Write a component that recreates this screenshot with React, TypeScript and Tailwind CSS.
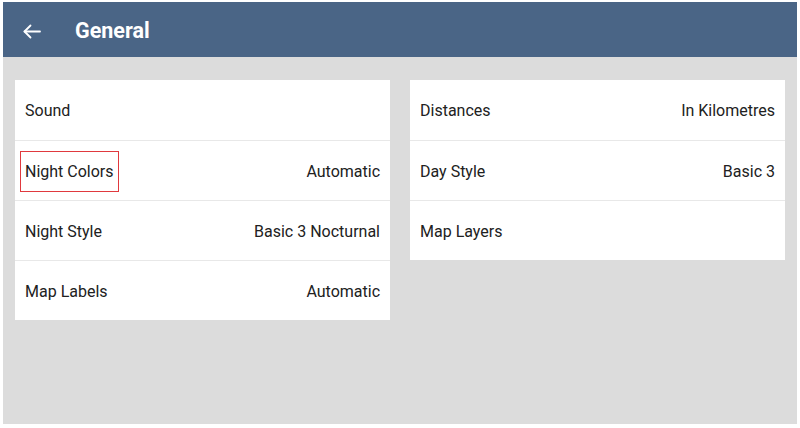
import React from 'react';

type Row = { label: string; value?: string; highlight?: boolean };

const leftRows: Row[] = [
  { label: 'Sound' },
  { label: 'Night Colors', value: 'Automatic', highlight: true },
  { label: 'Night Style', value: 'Basic 3 Nocturnal' },
  { label: 'Map Labels', value: 'Automatic' },
];

const rightRows: Row[] = [
  { label: 'Distances', value: 'In Kilometres' },
  { label: 'Day Style', value: 'Basic 3' },
  { label: 'Map Layers' },
];

const BackArrow = () => (
  <svg width="18" height="15" viewBox="0 0 18 15" fill="none" stroke="currentColor" strokeWidth="1.8" strokeLinecap="round" strokeLinejoin="round">
    <path d="M17 7.5H1.5" />
    <path d="M7.5 1.5L1.5 7.5L7.5 13.5" />
  </svg>
);

const SettingsCard: React.FC<{ rows: Row[] }> = ({ rows }) => (
  <div className="w-[375px] self-start bg-white">
    {rows.map((row, i) => (
      <div
        key={row.label}
        className={`flex h-[60px] items-center justify-between px-[10px] pt-[2px] ${
          i > 0 ? 'border-t border-[#e8e8e8]' : ''
        }`}
      >
        {row.highlight ? (
          <span className="-mx-[5px] flex h-[41px] items-center border border-[#e0393e] px-[4px] text-[16px] text-[#212121]">
            {row.label}
          </span>
        ) : (
          <span className="text-[16px] text-[#212121]">{row.label}</span>
        )}
        {row.value && <span className="text-[16px] text-[#212121]">{row.value}</span>}
      </div>
    ))}
  </div>
);

export default function App() {
  return (
    <div className="h-[428px] w-[800px] bg-white pb-[4px] pl-[3px] pr-[3px] pt-[2px] font-['Roboto',sans-serif]">
      <div className="flex h-full flex-col">
        <header className="flex h-[55px] shrink-0 items-center bg-[#4a6586] pl-[20px] pt-[3px] text-white">
          <BackArrow />
          <h1 className="ml-[34px] text-[21.5px] font-bold">General</h1>
        </header>
        <main className="flex flex-1 gap-[20px] bg-[#dcdcdc] px-[12px] pt-[23px]">
          <SettingsCard rows={leftRows} />
          <SettingsCard rows={rightRows} />
        </main>
      </div>
    </div>
  );
}
